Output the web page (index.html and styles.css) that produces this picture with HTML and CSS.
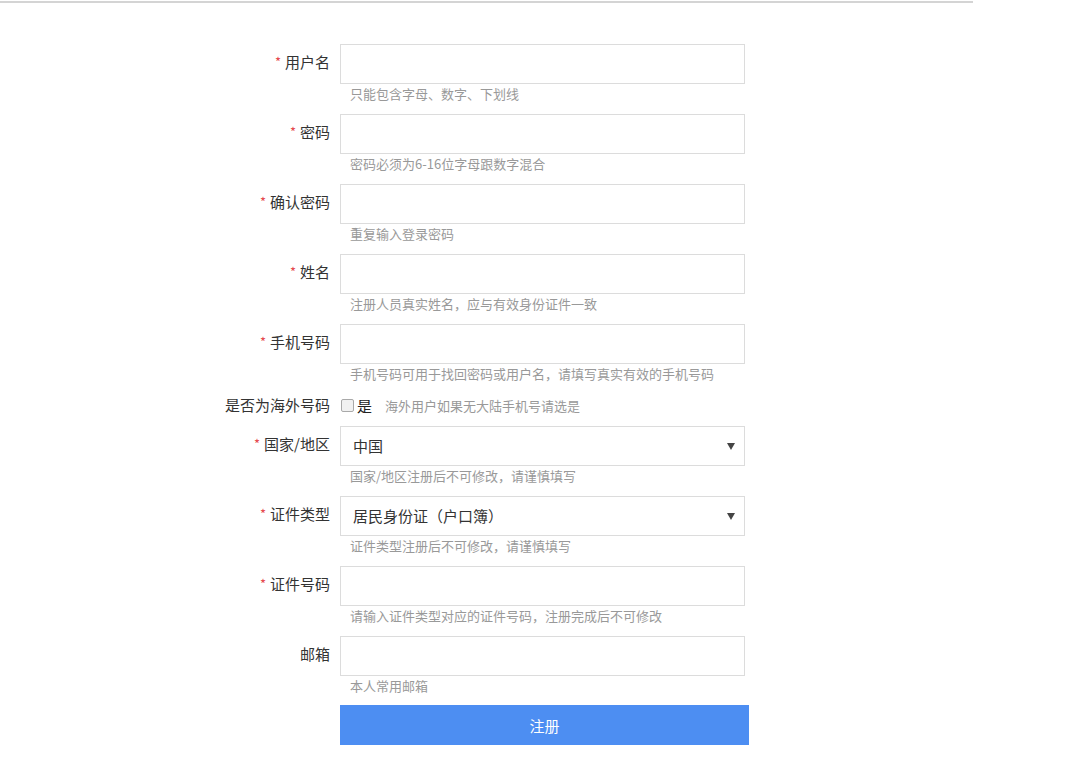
FILE: index.html
```html
<!DOCTYPE html>
<html lang="zh-CN">
<head>
<meta charset="utf-8">
<title>注册</title>
<link rel="stylesheet" href="styles.css">
</head>
<body>
<div class="topline"></div>
<form class="form">
  <div class="row">
    <label class="label"><span class="star">*</span>用户名</label>
    <div class="field"><input class="input" type="text"><div class="hint">只能包含字母、数字、下划线</div></div>
  </div>
  <div class="row">
    <label class="label"><span class="star">*</span>密码</label>
    <div class="field"><input class="input" type="password"><div class="hint">密码必须为6-16位字母跟数字混合</div></div>
  </div>
  <div class="row">
    <label class="label"><span class="star">*</span>确认密码</label>
    <div class="field"><input class="input" type="password"><div class="hint">重复输入登录密码</div></div>
  </div>
  <div class="row">
    <label class="label"><span class="star">*</span>姓名</label>
    <div class="field"><input class="input" type="text"><div class="hint">注册人员真实姓名，应与有效身份证件一致</div></div>
  </div>
  <div class="row">
    <label class="label"><span class="star">*</span>手机号码</label>
    <div class="field"><input class="input" type="text"><div class="hint">手机号码可用于找回密码或用户名，请填写真实有效的手机号码</div></div>
  </div>
  <div class="row row-check">
    <label class="label">是否为海外号码</label>
    <div class="checkline"><span class="checkbox"></span><span class="yes">是</span><span class="hint-inline">海外用户如果无大陆手机号请选是</span></div>
  </div>
  <div class="row">
    <label class="label"><span class="star">*</span>国家/地区</label>
    <div class="field"><div class="select"><span>中国</span><span class="arrow"></span></div><div class="hint">国家/地区注册后不可修改，请谨慎填写</div></div>
  </div>
  <div class="row">
    <label class="label"><span class="star">*</span>证件类型</label>
    <div class="field"><div class="select"><span>居民身份证（户口簿）</span><span class="arrow"></span></div><div class="hint">证件类型注册后不可修改，请谨慎填写</div></div>
  </div>
  <div class="row">
    <label class="label"><span class="star">*</span>证件号码</label>
    <div class="field"><input class="input" type="text"><div class="hint">请输入证件类型对应的证件号码，注册完成后不可修改</div></div>
  </div>
  <div class="row row-last">
    <label class="label">邮箱</label>
    <div class="field"><input class="input" type="text"><div class="hint">本人常用邮箱</div></div>
  </div>
  <div class="row">
    <span class="label"></span>
    <button class="btn" type="button">注册</button>
  </div>
</form>
</body>
</html>
```
FILE: styles.css
```css
html, body {
  margin: 0;
  padding: 0;
  background: #fff;
  font-family: "Noto Sans CJK SC", "Liberation Sans", sans-serif;
  color: #333;
}
.topline {
  width: 973px;
  height: 2px;
  margin-top: 1px;
  background: #d4d4d4;
}
.form {
  margin-top: 41px;
  display: flex;
  flex-direction: column;
}
.row {
  display: flex;
  align-items: flex-start;
  margin-bottom: 10px;
}
.row-last { margin-bottom: 9px; }
.label {
  width: 340px;
  box-sizing: border-box;
  padding-right: 10px;
  flex: none;
  text-align: right;
  font-size: 15px;
  line-height: 20px;
  padding-top: 8px;
  color: #333;
  white-space: nowrap;
}
.star {
  color: #e5484d;
  font-size: 13px;
  margin-right: 4px;
  position: relative;
  top: -1px;
}
.field {
  display: flex;
  flex-direction: column;
  width: 405px;
}
.input {
  box-sizing: border-box;
  width: 405px;
  height: 40px;
  margin: 0;
  border: 1px solid #dcdcdc;
  outline: none;
  background: #fff;
  padding: 0 12px;
}
.hint {
  font-size: 13px;
  line-height: 18px;
  padding-top: 1px;
  padding-bottom: 1px;
  padding-left: 10px;
  color: #999;
  white-space: nowrap;
}
.row-check .label { padding-top: 1px; }
.row-check { height: 22px; }
.checkline {
  display: flex;
  align-items: center;
  height: 22px;
  padding-left: 1px;
}
.checkbox {
  width: 11px;
  height: 11px;
  border: 1px solid #a9a9a9;
  border-radius: 2px;
  background: #f1f1f1;
  margin-right: 3px;
}
.yes {
  font-size: 15px;
  color: #222;
  margin-right: 13px;
}
.hint-inline {
  font-size: 13px;
  color: #999;
}
.select {
  box-sizing: border-box;
  width: 405px;
  height: 40px;
  border: 1px solid #dcdcdc;
  display: flex;
  align-items: center;
  justify-content: space-between;
  padding: 0 9px 0 12px;
  font-size: 15px;
  line-height: 36px;
  color: #333;
}
.arrow {
  width: 0;
  height: 0;
  border-left: 4px solid transparent;
  border-right: 4px solid transparent;
  border-top: 7px solid #444;
}
.btn {
  width: 409px;
  height: 40px;
  margin: 0;
  border: none;
  background: #4d8ef2;
  color: #fff;
  font-family: "Noto Sans CJK SC", "Liberation Sans", sans-serif;
  font-size: 15px;
  cursor: pointer;
}
```
